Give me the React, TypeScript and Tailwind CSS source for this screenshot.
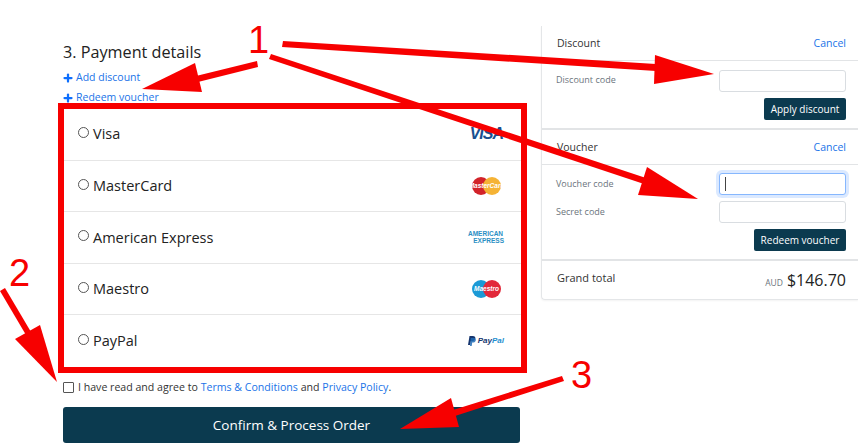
import React from "react";
import { Plus } from "lucide-react";

const font = { fontFamily: '"Open Sans", "Noto Sans", sans-serif' };

function Visa() {
  return (
    <span className="relative block w-[34px] h-[14px] text-right">
      <span className="absolute right-[1px] top-[-3px] text-[16px] leading-[20px] font-extrabold italic text-[#1a4f8f] tracking-[-1px]" style={{ fontFamily: '"Liberation Sans", sans-serif' }}>VISA</span>
    </span>
  );
}
function Circles({ a, b, label, labelColor }: { a: string; b: string; label: string; labelColor: string }) {
  return (
    <span className="relative flex w-[29px] h-[18px] mr-[3px]">
      <span className="absolute left-0 top-0 size-[18px] rounded-full" style={{ background: a }} />
      <span className="absolute left-[11px] top-0 size-[18px] rounded-full" style={{ background: b }} />
      <span className="absolute inset-0 flex items-center justify-center text-[6.5px] font-bold italic leading-none" style={{ color: labelColor, fontFamily: '"Liberation Sans", sans-serif' }}>{label}</span>
    </span>
  );
}
function Amex() {
  return (
    <span className="flex flex-col items-end text-[6.5px] font-extrabold leading-[7px] text-[#2b8fc4] w-[36px]" style={{ fontFamily: '"Liberation Sans", sans-serif' }}>
      <span className="self-start whitespace-nowrap">AMERICAN</span>
      <span className="whitespace-nowrap">EXPRESS</span>
    </span>
  );
}
function PayPal() {
  return (
    <span className="flex items-center gap-[2px]">
      <svg width="8" height="10" viewBox="0 0 8 10">
        <path d="M1.5 0h3.2C6.8 0 7.6 1 7.3 2.6 6.9 4.4 5.6 5.2 3.9 5.2H2.8L2.2 9H0z" fill="#15356f" />
        <path d="M2.8 2h3.2c1.6 0 2 .9 1.8 2.2C7.5 5.700 6.400 6.600 5 6.600H4.200L3.700 10H2z" fill="#1f6bb5" opacity=".85" />
      </svg>
      <span className="text-[8px] font-bold italic leading-none" style={{ fontFamily: '"Liberation Sans", sans-serif' }}>
        <span className="text-[#15356f]">Pay</span><span className="text-[#1f8fd0]">Pal</span>
      </span>
    </span>
  );
}

function Row({ name, logo, last }: { name: string; logo: React.ReactNode; last?: boolean }) {
  return (
    <div className={`flex items-center h-[51.6px] pl-[14px] pr-[17px] ${last ? "" : "border-b border-[#e6e6e6]"}`}>
      <span className="size-[11px] rounded-full border border-[#555] bg-white -mt-[3px] shrink-0" />
      <span className="ml-[4px] text-[14.5px] text-[#222]">{name}</span>
      <span className="ml-auto flex justify-end">{logo}</span>
    </div>
  );
}

function Btn({ children, w }: { children: React.ReactNode; w: string }) {
  return (
    <button className={`${w} h-[22px] rounded-[2px] bg-[#0b3a4f] text-white text-[10px] leading-[22px] text-center`}>{children}</button>
  );
}

function Field({ label, focus, shift }: { label: string; focus?: boolean; shift: string }) {
  return (
    <div className="flex items-center justify-between h-[22px]">
      <span className={`text-[9px] text-[#6c757d] ${shift}`}>{label}</span>
      <div className={`w-[127px] h-[22px] rounded-[3px] bg-white border flex items-center pl-[5px] ${focus ? "border-[#86b7fe] shadow-[0_0_0_3px_rgba(13,110,253,0.15)]" : "border-[#d9dde1]"}`}>
        {focus && <span className="w-[1px] h-[14px] bg-[#444]" />}
      </div>
    </div>
  );
}

function CardHead({ title }: { title: string }) {
  return (
    <div className="flex items-center justify-between h-[35px] pt-[2px] border-b border-[#e2e4e6] pl-[15px] pr-[12px] text-[10.5px] text-[#333]">
      <span>{title}</span>
      <span className="text-[#1a73e8]">Cancel</span>
    </div>
  );
}

function Add({ children }: { children: React.ReactNode }) {
  return (
    <div className="flex items-center h-[20px] text-[10.5px] text-[#1a73e8]">
      <Plus size={12} strokeWidth={4.5} className="text-[#0d6efd] -ml-[1px] mr-[2px]" />{children}
    </div>
  );
}

const digit = { fontFamily: '"Liberation Sans", sans-serif' };

export default function App() {
  return (
    <div className="relative flex w-[858px] h-[448px] overflow-hidden bg-white" style={font}>
      <div className="w-[469px] ml-[58px] shrink-0 pt-[42px]">
        <div className="pl-[5px]">
          <h2 className="text-[16.2px] leading-[20px] text-[#222]">3. Payment details</h2>
          <div className="mt-[6px]"><Add>Add discount</Add></div>
          <Add>Redeem voucher</Add>
        </div>
        <div className="-mt-[5px] border-[6px] border-[#f70000] bg-white">
          <Row name="Visa" logo={<Visa />} />
          <Row name="MasterCard" logo={<Circles a="#d2232a" b="#f5b335" label="MasterCard" labelColor="#fff" />} />
          <Row name="American Express" logo={<Amex />} />
          <Row name="Maestro" logo={<Circles a="#1b9ad6" b="#e2283a" label="Maestro" labelColor="#fff" />} />
          <Row name="PayPal" last logo={<PayPal />} />
        </div>
        <div className="pl-[5px]">
          <div className="mt-[9px] flex items-center h-[12px] text-[10.6px] text-[#333]">
            <span className="size-[11px] border border-[#555] rounded-[1px] mr-[4px] shrink-0" />
            <span>I have read and agree to <span className="text-[#1a73e8]">Terms &amp; Conditions</span> and <span className="text-[#1a73e8]">Privacy Policy</span>.</span>
          </div>
          <button className="mt-[13px] w-[457px] h-[36px] pt-[1px] rounded-[3px] bg-[#0b3a4f] text-white text-[13.5px]">Confirm &amp; Process Order</button>
        </div>
      </div>

      <div className="ml-[14px] mt-[26px] w-[317px] h-[274px] shrink-0 border-l border-b border-[#e4e6e8] rounded-bl-[4px] shadow-[0_1px_2px_rgba(0,0,0,0.05)]">
        <CardHead title="Discount" />
        <div className="h-[69px] border-b-2 border-[#e2e4e6] pl-[14px] pr-[12px] pt-[9px]">
          <Field label="Discount code" shift="-mt-[3px]" />
          <div className="mt-[6px] flex justify-end"><Btn w="w-[82px]">Apply discount</Btn></div>
        </div>
        <CardHead title="Voucher" />
        <div className="h-[96px] border-b-2 border-[#e2e4e6] pl-[14px] pr-[12px] pt-[8px] flex flex-col gap-[6px]">
          <Field label="Voucher code" focus shift="-mt-[1px]" />
          <Field label="Secret code" shift="-mt-[1px]" />
          <div className="flex justify-end"><Btn w="w-[92px]">Redeem voucher</Btn></div>
        </div>
        <div className="flex items-center justify-between h-[38px] pl-[15px] pr-[12px]">
          <span className="text-[11px] text-[#333] -mt-[4px]">Grand total</span>
          <span className="flex items-baseline gap-[4px] text-[#222]"><span className="text-[8.5px] text-[#6c757d]">AUD</span><span className="text-[16px]">$146.70</span></span>
        </div>
      </div>

      <span className="absolute left-[248px] top-[16px] text-[38px] leading-[48px] text-[#f70000]" style={digit}>1</span>
      <span className="absolute left-[9px] top-[249px] text-[38px] leading-[48px] text-[#f70000]" style={digit}>2</span>
      <span className="absolute left-[571px] top-[351px] text-[38px] leading-[48px] text-[#f70000]" style={digit}>3</span>
      <svg className="absolute inset-0 pointer-events-none" width="858" height="448" viewBox="0 0 858 448">
        <g fill="#f70000">
          <path d="M257 61l1 6-60 15-2-6z" />
          <path d="M142 89L195 63l7 29z" />
          <path d="M283 41l-1 6 374 24 0-7z" />
          <path d="M714 74L655 55l-1 29z" />
          <path d="M271 54l-2 5 375 125 2-6z" />
          <path d="M698 199L647 167l-9 28z" />
          <path d="M0 291l5-3 26 44-5 3z" />
          <path d="M57 382L15 339l25-14z" />
          <path d="M562 376l2 5-109 35-2-6z" />
          <path d="M400 429L451 398l8 29z" />
        </g>
      </svg>
    </div>
  );
}
